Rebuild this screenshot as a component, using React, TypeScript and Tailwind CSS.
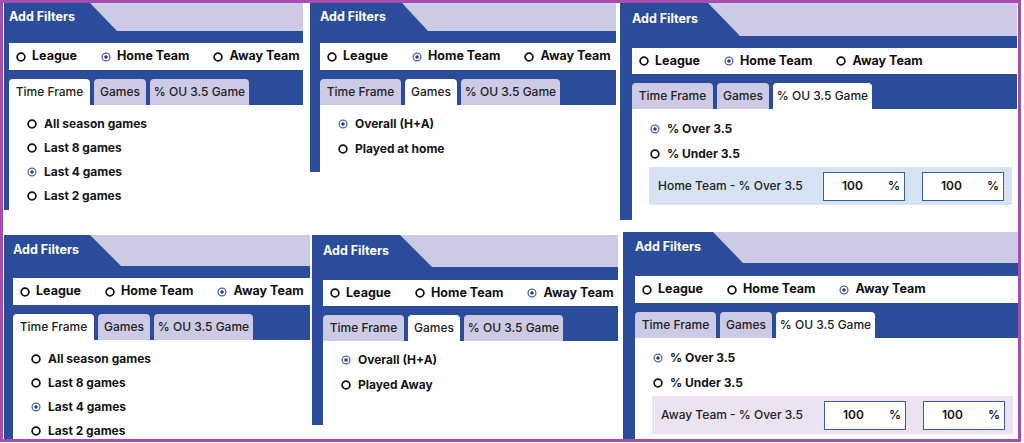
const BLUE = "bg-[#2a4c9b]";

const Radio = ({ on }: { on?: boolean }) => (
  <svg width="10" height="10" viewBox="0 0 10 10" className="shrink-0">
    <circle
      cx="5"
      cy="5"
      r="3.9"
      fill="white"
      stroke={on ? "#4e64a6" : "#111"}
      strokeWidth={on ? 1.3 : 1.7}
    />
    {on && <circle cx="5" cy="5" r="1.8" fill="#2c3d7d" />}
  </svg>
);

type Team = "league" | "home" | "away";
type Tab = "time" | "games" | "ou";

type PanelProps = {
  className: string;
  headerH: string;
  pad: string;
  tabShape: string;
  band: string;
  row: string;
  team: Team;
  tab: Tab;
};

const Option = ({ on, label, h }: { on?: boolean; label: string; h: string }) => (
  <div className={`flex items-center gap-[7px] pl-[18px] ${h}`}>
    <Radio on={on} />
    <span className="text-[12px] font-bold text-[#151515] whitespace-nowrap">{label}</span>
  </div>
);

const PctInput = () => (
  <div className="w-[82px] h-[29px] shrink-0 bg-white border border-[#3d5cab] flex items-center justify-end pr-[4px] text-[12px] font-semibold text-[#151515]">
    <span>100</span>
    <span className="ml-[25px]">%</span>
  </div>
);

const Panel = ({ className, headerH, pad, tabShape, band, row, team, tab }: PanelProps) => {
  const isHome = team === "home";
  return (
    <div className={`${BLUE} flex flex-col shrink-0 ${className}`}>
      <div className={`flex bg-[#cdcae6] shrink-0 ${headerH}`}>
        <div className={`${BLUE} flex items-center text-white text-[12.5px] font-bold whitespace-nowrap ${pad} ${tabShape}`}>
          Add Filters
        </div>
      </div>
      <div className={`flex flex-col flex-1 ${pad}`}>
        <div className={`shrink-0 ${band}`} />
        <div className={`bg-white flex items-center pl-[7px] gap-[24px] shrink-0 overflow-hidden ${row}`}>
          {(
            [
              ["league", "League"],
              ["home", "Home Team"],
              ["away", "Away Team"],
            ] as [Team, string][]
          ).map(([k, label]) => (
            <div key={k} className="flex items-center gap-[6px] shrink-0">
              <Radio on={team === k} />
              <span className="text-[12.5px] font-bold text-[#111] whitespace-nowrap">{label}</span>
            </div>
          ))}
        </div>
        <div className="h-[9px] shrink-0" />
        <div className="flex gap-[4px] h-[26px] shrink-0">
          {(
            [
              ["time", "Time Frame", "w-[81px]"],
              ["games", "Games", "w-[52px]"],
              ["ou", "% OU 3.5 Game", "w-[99px]"],
            ] as [Tab, string, string][]
          ).map(([k, label, w]) => (
            <div
              key={k}
              className={`${w} rounded-t-[4px] flex items-center justify-center whitespace-nowrap text-[12px] font-medium text-[#222] ${
                tab === k ? "bg-white" : "bg-[#cdcae6]"
              }`}
            >
              {label}
            </div>
          ))}
        </div>
        <div className="bg-white flex-1 flex flex-col pt-[7px]">
          {tab === "time" && (
            <>
              <Option h="h-[24px]" label="All season games" />
              <Option h="h-[24px]" label="Last 8 games" />
              <Option h="h-[24px]" on label="Last 4 games" />
              <Option h="h-[24px]" label="Last 2 games" />
            </>
          )}
          {tab === "games" && (
            <>
              <Option h="h-[24px]" on label="Overall (H+A)" />
              <Option h="h-[25px]" label={isHome ? "Played at home" : "Played Away"} />
            </>
          )}
          {tab === "ou" && (
            <>
              <Option h="h-[25px]" on label="% Over 3.5" />
              <Option h="h-[25px]" label="% Under 3.5" />
              <div
                className={`mt-[1px] ml-[17px] mr-[5px] h-[38px] flex items-center pl-[9px] pr-[8px] gap-[17px] ${
                  isHome ? "bg-[#d5e3f4]" : "bg-[#ebe2f2]"
                }`}
              >
                <span className="flex-1 text-[12px] font-medium text-[#222] whitespace-nowrap">
                  {isHome ? "Home Team" : "Away Team"} - % Over 3.5
                </span>
                <PctInput />
                <PctInput />
              </div>
            </>
          )}
        </div>
      </div>
    </div>
  );
};

export default function App() {
  return (
    <div className="w-[1024px] h-[443px] bg-white font-['Inter','Liberation_Sans',sans-serif]">
      <div className="w-[1021px] h-[442px] border-[3px] border-[#a34eb1] overflow-hidden flex flex-col">
        <div className="flex items-start h-[229px] shrink-0">
          <Panel
            className="ml-[1px] w-[299px] h-[207px]"
            headerH="h-[28px]"
            pad="pl-[5px]"
            tabShape="w-[113px] [clip-path:polygon(0_0,86px_0,113px_100%,0_100%)]"
            band="h-[12px]"
            row="h-[27px]"
            team="home"
            tab="time"
          />
          <Panel
            className="ml-[7px] w-[306px] h-[169px]"
            headerH="h-[28px]"
            pad="pl-[10px]"
            tabShape="w-[118px] [clip-path:polygon(0_0,92px_0,118px_100%,0_100%)]"
            band="h-[12px]"
            row="h-[27px]"
            team="home"
            tab="games"
          />
          <Panel
            className="ml-[4px] w-[397px] h-[217px]"
            headerH="h-[33px]"
            pad="pl-[12px]"
            tabShape="w-[120px] [clip-path:polygon(0_0,88px_0,120px_100%,0_100%)]"
            band="h-[12px]"
            row="h-[26px]"
            team="home"
            tab="ou"
          />
        </div>
        <div className="flex items-start shrink-0">
          <Panel
            className="mt-[3px] ml-[1px] w-[306px] h-[230px]"
            headerH="h-[31px]"
            pad="pl-[9px]"
            tabShape="w-[117px] [clip-path:polygon(0_0,86px_0,117px_100%,0_100%)]"
            band="h-[12px]"
            row="h-[27px]"
            team="away"
            tab="time"
          />
          <Panel
            className="mt-[3px] ml-[2px] w-[306px] h-[190px]"
            headerH="h-[32px]"
            pad="pl-[11px]"
            tabShape="w-[120px] [clip-path:polygon(0_0,88px_0,120px_100%,0_100%)]"
            band="h-[13px]"
            row="h-[26px]"
            team="away"
            tab="games"
          />
          <Panel
            className="ml-[5px] w-[395px] h-[230px]"
            headerH="h-[31px]"
            pad="pl-[12px]"
            tabShape="w-[120px] [clip-path:polygon(0_0,90px_0,120px_100%,0_100%)]"
            band="h-[13px]"
            row="h-[27px]"
            team="away"
            tab="ou"
          />
        </div>
      </div>
    </div>
  );
}
